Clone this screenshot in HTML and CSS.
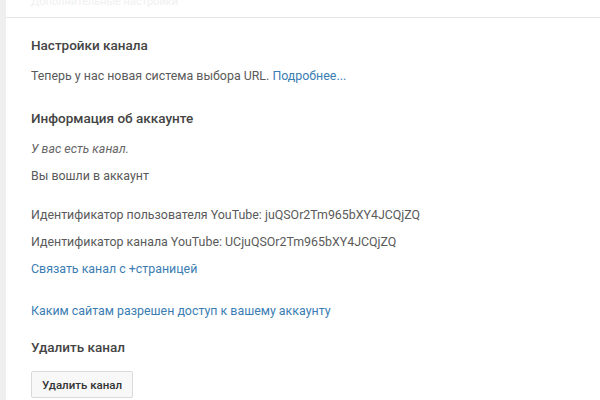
FILE: index.html
```html
<!DOCTYPE html>
<html lang="ru">
<head>
    <meta charset="UTF-8">
    <title>Дополнительно</title>
    <link rel="stylesheet" href="styles.css">
</head>
<body>
    <div class="page">
        <div class="top-card">
            <div class="top-text">Дополнительные настройки</div>
        </div>
        <div class="card">
            <h2 class="title">Настройки канала</h2>
            <p class="line first">Теперь у нас новая система выбора URL. <a href="#">Подробнее...</a></p>

            <h2 class="title section">Информация об аккаунте</h2>
            <p class="line first"><em>У вас есть канал.</em></p>
            <p class="line">Вы вошли в аккаунт</p>
            <p class="line group">Идентификатор пользователя YouTube: juQSOr2Tm965bXY4JCQjZQ</p>
            <p class="line">Идентификатор канала YouTube: UCjuQSOr2Tm965bXY4JCQjZQ</p>
            <p class="line"><a href="#">Связать канал с +страницей</a></p>
            <p class="line section"><a href="#">Каким сайтам разрешен доступ к вашему аккаунту</a></p>

            <h2 class="title delete">Удалить канал</h2>
            <button class="btn">Удалить канал</button>
        </div>
    </div>
</body>
</html>
```
FILE: styles.css
```css
body, html {
    margin: 0;
    padding: 0;
    height: 100%;
    overflow: hidden;
    font-family: Roboto, Arial, sans-serif;
    background-color: #efefef;
}
.page {
    margin-left: 6px;
    height: 100%;
    background-color: #fff;
}
.top-card {
    height: 17px;
    overflow: hidden;
    border-bottom: 1px solid #e6e6e6;
    padding-left: 25px;
}
.top-text {
    margin-top: -4px;
    font-size: 11px;
    line-height: 12px;
    color: #f0f0f0;
}
.card {
    padding: 19px 25px 0;
}
.title {
    margin: 0;
    font-size: 13.5px;
    font-weight: 500;
    line-height: 16px;
    color: #444;
}
.title.section {
    margin-top: 26px;
}
.title.delete {
    margin-top: 20px;
}
.line {
    margin: 10px 0 0;
    font-size: 12.4px;
    line-height: 16px;
    color: #5a5a5a;
}
.line.first {
    margin-top: 15px;
}
.line.group {
    margin-top: 23px;
}
.line.section {
    margin-top: 26px;
}
.line + .line:not(.group):not(.section):not(.first) {
    margin-top: 11px;
}
.line em {
    color: #666;
}
a {
    color: #3b7db3;
    text-decoration: none;
}
.btn {
    margin-top: 16px;
    height: 27px;
    padding: 0 10px;
    border: 1px solid #dadada;
    border-radius: 2px;
    background-color: #f8f8f8;
    font-family: Roboto, Arial, sans-serif;
    font-size: 11.5px;
    font-weight: 500;
    color: #333;
}
```
